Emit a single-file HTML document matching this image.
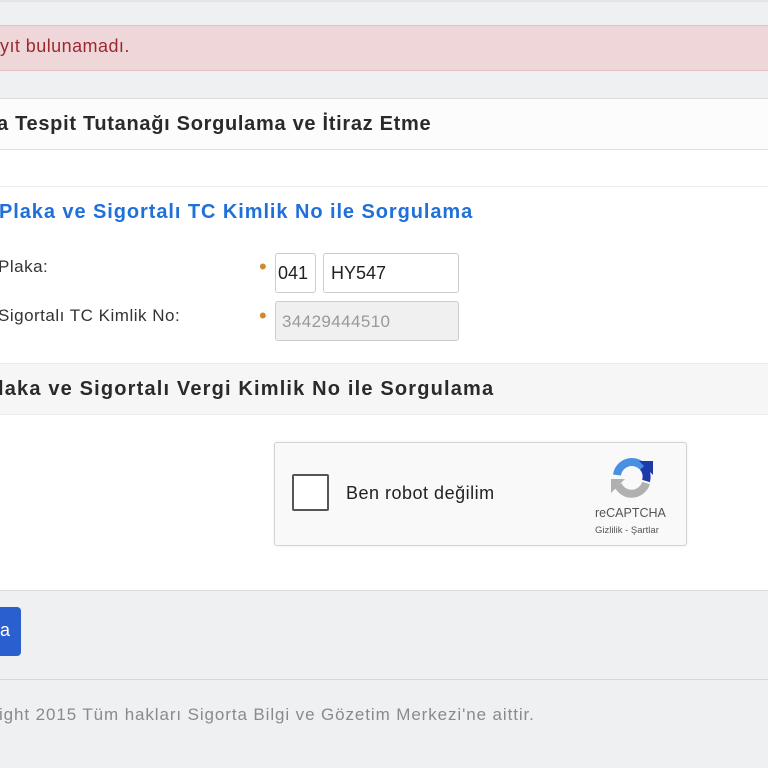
<!DOCTYPE html>
<html><head><meta charset="utf-8"><style>
*{margin:0;padding:0;box-sizing:border-box}
body{width:768px;height:768px;overflow:hidden;background:#eff0f2;font-family:"Liberation Sans",Arial,sans-serif;position:relative}
.a{position:absolute;white-space:nowrap}
</style></head><body>
<div class="a" style="left:0;top:0;width:768px;height:2px;background:#e4e5e7"></div>
<div class="a" style="left:-5px;top:25px;width:778px;height:46px;background:#efd6d9;border:1px solid #e2bfc4"></div>
<div class="a" style="left:0;top:35px;font-size:18px;color:#9a2a30;line-height:22px;letter-spacing:0.45px">yıt bulunamadı.</div>
<div class="a" style="left:-5px;top:98px;width:778px;height:493px;background:#fff;border:1px solid #dcdcdc"></div>
<div class="a" style="left:0;top:99px;width:768px;height:51px;background:#fcfcfc;border-bottom:1px solid #e0e0e0"></div>
<div class="a" style="left:-3px;top:112px;font-size:20px;font-weight:bold;color:#2a2a2a;line-height:24px;letter-spacing:0.7px">a Tespit Tutanağı Sorgulama ve İtiraz Etme</div>
<div class="a" style="left:0;top:186px;width:768px;height:1px;background:#ececec"></div>
<div class="a" style="left:-1px;top:200px;font-size:20px;font-weight:bold;color:#1f70d8;line-height:24px;letter-spacing:0.93px">Plaka ve Sigortalı TC Kimlik No ile Sorgulama</div>
<div class="a" style="left:-2px;top:257px;font-size:17px;color:#333;line-height:20px;letter-spacing:0.5px">Plaka:</div>
<div class="a" style="left:-2px;top:306px;font-size:17px;color:#333;line-height:20px;letter-spacing:0.5px">Sigortalı TC Kimlik No:</div>
<div class="a" style="left:259px;top:256px;font-size:22px;line-height:22px;color:#d08a2c">•</div>
<div class="a" style="left:259px;top:305px;font-size:22px;line-height:22px;color:#d08a2c">•</div>
<div class="a" style="left:275px;top:253px;width:41px;height:40px;border:1px solid #ccc;border-radius:3px;font-size:18px;color:#222;padding:9px 0 0 2px">041</div>
<div class="a" style="left:323px;top:253px;width:136px;height:40px;border:1px solid #ccc;border-radius:3px;font-size:18px;color:#222;padding:9px 0 0 7px">HY547</div>
<div class="a" style="left:275px;top:301px;width:184px;height:40px;border:1px solid #ccc;border-radius:3px;background:#f0f0f0;font-size:17px;color:#999;padding:10px 0 0 6px;letter-spacing:0.4px">34429444510</div>
<div class="a" style="left:0;top:363px;width:768px;height:52px;background:#f6f6f6;border-top:1px solid #eaeaea;border-bottom:1px solid #eaeaea"></div>
<div class="a" style="left:-2px;top:377px;font-size:20px;font-weight:bold;color:#2a2a2a;line-height:24px;letter-spacing:1.17px">laka ve Sigortalı Vergi Kimlik No ile Sorgulama</div>
<div class="a" style="left:274px;top:442px;width:413px;height:104px;background:#f9f9f9;border:1px solid #d3d3d3;border-radius:3px;box-shadow:0 0 3px rgba(0,0,0,.08)"></div>
<div class="a" style="left:292px;top:474px;width:37px;height:37px;border:2px solid #555;border-radius:2px;background:#fff"></div>
<div class="a" style="left:346px;top:482px;font-size:18px;color:#222;line-height:22px;letter-spacing:0.5px">Ben robot değilim</div>
<svg class="a" style="left:609px;top:457px" width="46" height="44" viewBox="0 0 46 44">
<path d="M8 18 A15 15 0 0 1 34 10" stroke="#4a90e2" stroke-width="8" fill="none"/>
<path d="M30 4 L44 4 L44 18 Z" fill="#1c3aa9"/>
<path d="M34 10 A15 15 0 0 1 37 24" stroke="#1c3aa9" stroke-width="8" fill="none"/>
<path d="M37 26 A15 15 0 0 1 9 28" stroke="#b0b0b0" stroke-width="8" fill="none"/>
<path d="M2 22 L16 22 L2 36 Z" fill="#b0b0b0"/>
</svg>
<div class="a" style="left:595px;top:506px;font-size:12.5px;color:#555">reCAPTCHA</div>
<div class="a" style="left:595px;top:525px;font-size:9.5px;color:#555">Gizlilik - Şartlar</div>
<div class="a" style="left:-10px;top:607px;width:31px;height:49px;background:#2a5fcf;border-radius:4px;color:#fff;font-size:18px;padding:13px 0 0 10px">a</div>
<div class="a" style="left:0;top:679px;width:768px;height:1px;background:#d6d6d6"></div>
<div class="a" style="left:-1px;top:705px;font-size:17px;color:#8a8a8a;line-height:20px;letter-spacing:0.9px">ight 2015 Tüm hakları Sigorta Bilgi ve Gözetim Merkezi'ne aittir.</div>
</body></html>
